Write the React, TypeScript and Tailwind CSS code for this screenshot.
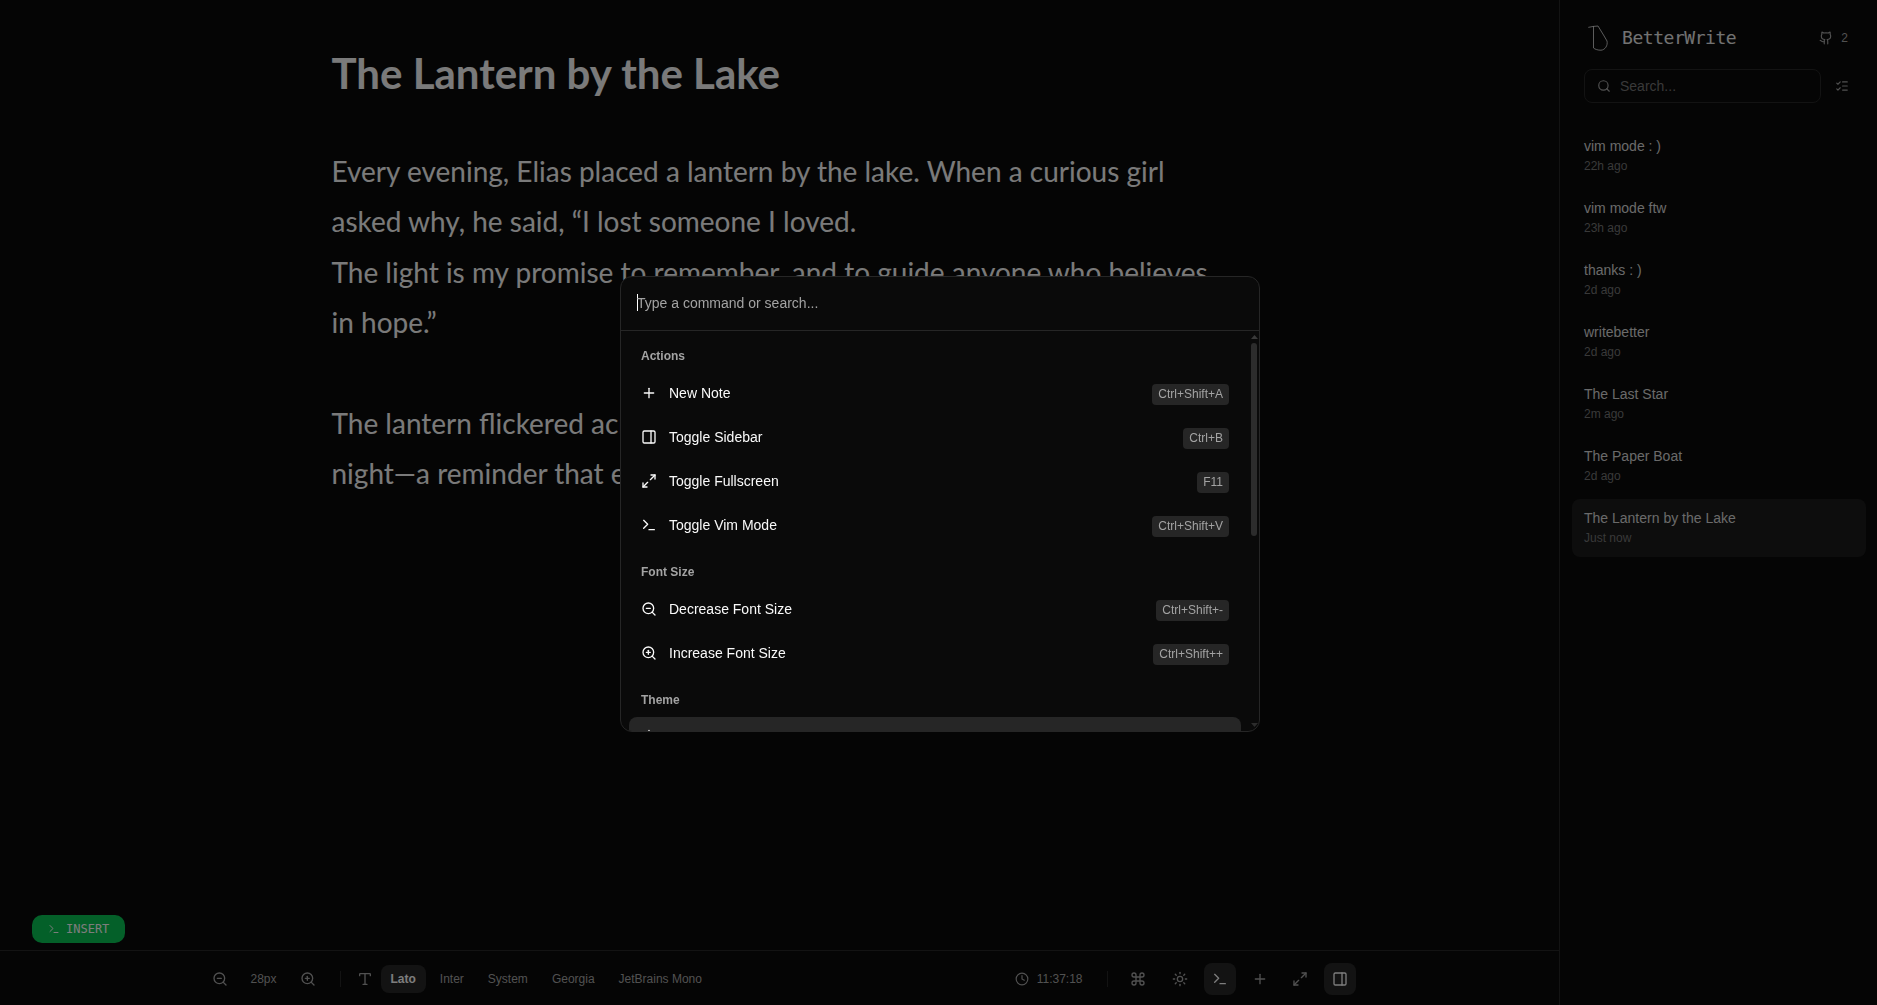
import React from 'react';
import {
  Clock,
  Command,
  Github,
  ListChecks,
  Maximize2,
  PanelRight,
  Plus,
  Search,
  Sun,
  Terminal,
  Type,
  ZoomIn,
  ZoomOut,
} from 'lucide-react';

const notes = [
  { title: 'vim mode : )', time: '22h ago' },
  { title: 'vim mode ftw', time: '23h ago' },
  { title: 'thanks : )', time: '2d ago' },
  { title: 'writebetter', time: '2d ago' },
  { title: 'The Last Star', time: '2m ago' },
  { title: 'The Paper Boat', time: '2d ago' },
  { title: 'The Lantern by the Lake', time: 'Just now', active: true },
];

const fonts = ['Lato', 'Inter', 'System', 'Georgia', 'JetBrains Mono'];

const groups = [
  {
    heading: 'Actions',
    items: [
      { icon: Plus, label: 'New Note', keys: 'Ctrl+Shift+A' },
      { icon: PanelRight, label: 'Toggle Sidebar', keys: 'Ctrl+B' },
      { icon: Maximize2, label: 'Toggle Fullscreen', keys: 'F11' },
      { icon: Terminal, label: 'Toggle Vim Mode', keys: 'Ctrl+Shift+V' },
    ],
  },
  {
    heading: 'Font Size',
    items: [
      { icon: ZoomOut, label: 'Decrease Font Size', keys: 'Ctrl+Shift+-' },
      { icon: ZoomIn, label: 'Increase Font Size', keys: 'Ctrl+Shift++' },
    ],
  },
  {
    heading: 'Theme',
    items: [{ icon: Sun, selected: true }],
  },
];

const Logo = () => (
  <svg width="20" height="27" viewBox="8 7 20 27" fill="none" stroke="currentColor" strokeWidth="0.8" strokeLinecap="round" strokeLinejoin="round">
    <path d="M8.7 9.3L13.5 8.4L18 8L23.5 17L27 23C28 27.5 25 32 21 32.2C18 32.3 15 31.3 13.5 30L13.5 8.4" />
  </svg>
);

const ToolButton = ({ active, children }: { active?: boolean; children: React.ReactNode }) => (
  <button className={`flex size-8 items-center justify-center rounded-lg ${active ? 'bg-[#262626] text-[#fafafa]' : 'text-[#a3a3a3]'}`}>
    {children}
  </button>
);

const BottomBar = () => (
  <div className="h-[55px] shrink-0 border-t border-[#262626]">
    <div className="mx-auto flex h-full max-w-6xl items-center justify-between pt-0.5">
      <div className="flex items-center">
        <ToolButton>
          <ZoomOut size={16} />
        </ToolButton>
        <span className="w-14 text-center text-xs text-[#a3a3a3]">28px</span>
        <ToolButton>
          <ZoomIn size={16} />
        </ToolButton>
        <div className="mx-4 h-4 w-px bg-[#262626]" />
        <Type size={16} className="mr-2 text-[#a3a3a3]" />
        <div className="flex items-center gap-1">
          {fonts.map((f) => (
            <span
              key={f}
              className={`flex h-7 items-center rounded-lg px-2.5 text-xs ${f === 'Lato' ? 'bg-[#262626] font-bold text-[#fafafa]' : 'text-[#a3a3a3]'}`}
            >
              {f}
            </span>
          ))}
        </div>
      </div>
      <div className="flex items-center">
        <Clock size={14} className="mr-2 text-[#a3a3a3]" />
        <span className="text-xs text-[#a3a3a3]">11:37:18</span>
        <div className="ml-6 mr-[14px] h-4 w-px bg-[#262626]" />
        <div className="flex items-center gap-2">
          <div className="mr-0.5">
            <ToolButton>
              <Command size={16} />
            </ToolButton>
          </div>
          <ToolButton>
            <Sun size={16} />
          </ToolButton>
          <ToolButton active>
            <Terminal size={16} />
          </ToolButton>
          <ToolButton>
            <Plus size={16} />
          </ToolButton>
          <ToolButton>
            <Maximize2 size={16} />
          </ToolButton>
          <ToolButton active>
            <PanelRight size={16} />
          </ToolButton>
        </div>
      </div>
    </div>
  </div>
);

const Sidebar = () => (
  <aside className="flex w-[318px] shrink-0 flex-col border-l border-[#262626] bg-[#0a0a0a]">
    <div className="flex items-center justify-between pl-[28px] pr-[29px] pt-6">
      <div className="flex items-center gap-[14px] text-[#e5e5e5]">
        <Logo />
        <span className="font-['DejaVu_Sans_Mono',monospace] text-lg tracking-tight">BetterWrite</span>
      </div>
      <div className="flex items-center gap-2 text-xs text-[#a3a3a3]">
        <Github size={14} />
        <span>2</span>
      </div>
    </div>
    <div className="flex items-center pl-6 pr-7 pt-[17px]">
      <div className="flex h-[34px] w-[237px] items-center gap-[9px] rounded-lg border border-[#262626] px-3">
        <Search size={14} className="text-[#a3a3a3]" />
        <span className="text-sm text-[#737373]">Search...</span>
      </div>
      <ListChecks size={14} className="ml-auto text-[#a3a3a3]" />
    </div>
    <div className="mt-6 flex flex-col gap-1 pl-3 pr-[11px]">
      {notes.map((n) => (
        <div key={n.title} className={`flex h-[58px] flex-col justify-center rounded-lg px-3 ${n.active ? 'bg-[#1a1a1a]' : ''}`}>
          <span className="text-sm leading-5 text-[#d4d4d4]">{n.title}</span>
          <span className="text-xs leading-5 text-[#737373]">{n.time}</span>
        </div>
      ))}
    </div>
  </aside>
);

const Palette = () => (
  <div className="fixed inset-0 z-10 flex justify-center bg-black/50 pl-[3px] pt-[276px]">
    <div className="flex h-[456px] w-[640px] flex-col overflow-hidden rounded-xl border border-[#262626] bg-[#0a0a0a]">
      <div className="flex h-[54px] shrink-0 items-center border-b border-[#262626] px-4 pb-0.5">
        <span className="-mr-px h-[17px] w-px shrink-0 bg-white" />
        <span className="text-sm text-[#a3a3a3]">Type a command or search...</span>
      </div>
      <div className="flex min-h-0 flex-1">
        <div className="min-w-0 flex-1 overflow-hidden p-2">
          {groups.map((g) => (
            <div key={g.heading} className="mb-2">
              <div className="flex h-8 items-center px-3 pt-0.5 text-xs font-semibold text-[#a3a3a3]">{g.heading}</div>
              {g.items.map((item: any, i: number) => {
                const Icon = item.icon;
                return (
                  <div key={i} className="h-11 py-0.5">
                    <div className={`flex h-10 items-center gap-3 rounded-lg px-3 text-sm text-[#fafafa] ${item.selected ? 'bg-[#262626]' : ''}`}>
                      <Icon size={16} />
                      {item.label && <span>{item.label}</span>}
                      {item.keys && <kbd className="ml-auto mt-0.5 rounded bg-[#262626] px-1.5 py-[3px] font-['Liberation_Sans',sans-serif] text-xs leading-[15px] text-[#a3a3a3]">{item.keys}</kbd>}
                    </div>
                  </div>
                );
              })}
            </div>
          ))}
        </div>
        {/* scrollbar: the browser hides native ones here, so it is drawn */}
        <div className="flex w-[10px] shrink-0 flex-col items-center py-1">
          <svg width="7" height="4" viewBox="0 0 7 4" className="shrink-0 text-[#3a3a3a]">
            <path d="M3.5 0L7 4H0Z" fill="currentColor" />
          </svg>
          <div className="mt-[4px] h-[193px] w-[6px] shrink-0 rounded-full bg-[#2c2c2c]" />
          <svg width="7" height="4" viewBox="0 0 7 4" className="mt-auto shrink-0 text-[#2c2c2c]">
            <path d="M3.5 4L7 0H0Z" fill="currentColor" />
          </svg>
        </div>
      </div>
    </div>
  </div>
);

export default function App() {
  return (
    <div className="flex h-screen w-full overflow-hidden bg-[#0a0a0a] font-['Liberation_Sans',Arial,sans-serif] text-[#fafafa]">
      <main className="relative flex min-w-0 flex-1 flex-col">
        <div className="flex-1 overflow-hidden">
          <div className="mx-auto max-w-4xl pt-[46px] font-['Lato',sans-serif] text-[#f5f5f5]">
            <h1 className="text-[42px] font-bold leading-[54px]">The Lantern by the Lake</h1>
            <div className="mt-[46px] text-[28px] leading-[50.4px]">
              <p>Every evening, Elias placed a lantern by the lake. When a curious girl asked why, he said, “I lost someone I loved.</p>
              <p>The light is my promise to remember, and to guide anyone who believes in hope.”</p>
              <p className="h-[50.4px]" />
              <p>The lantern flickered across the still water long after he was gone,</p>
              <p>night—a reminder that even in the dark, love stays.</p>
            </div>
          </div>
        </div>
        <div className="absolute bottom-[62px] left-8 flex h-7 items-center gap-1.5 rounded-[10px] bg-[#08c052] px-4 font-['DejaVu_Sans_Mono',monospace] text-xs text-[#fafafa]">
          <Terminal size={12} />
          <span>INSERT</span>
        </div>
        <BottomBar />
      </main>
      <Sidebar />
      <Palette />
    </div>
  );
}
